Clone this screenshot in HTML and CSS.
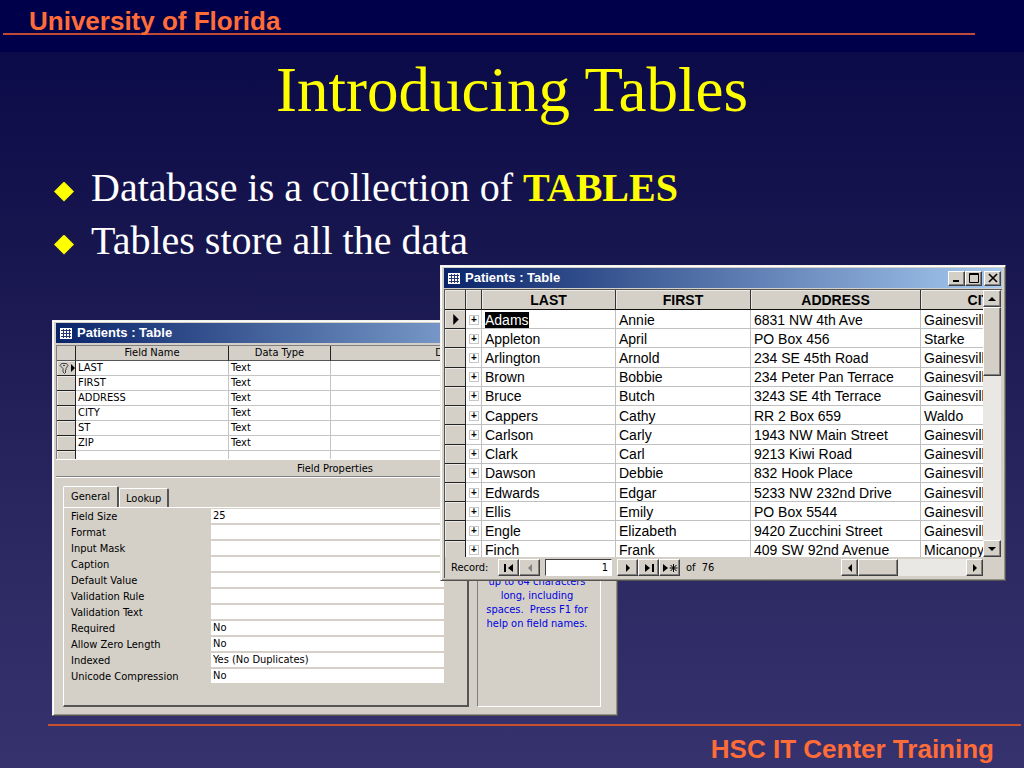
FILE: index.html
```
<!DOCTYPE html>
<html lang="en">
<head>
<meta charset="utf-8">
<title>Introducing Tables</title>
<link rel="stylesheet" href="styles.css">
</head>
<body>
<svg width="0" height="0" class="defs" aria-hidden="true">
  <symbol id="sheet" viewBox="0 0 12 11"><rect width="12" height="11" fill="#fff"/><path d="M1 2.500h10M1 5.500h10M1 8.500h10M3.500 1v9M6.500 1v9M9.500 1v9" stroke="#26386f"/></symbol>
  <symbol id="up" viewBox="0 0 8 8"><path d="M0 6L4 2L8 6Z"/></symbol>
  <symbol id="down" viewBox="0 0 8 8"><path d="M0 2L4 6L8 2Z"/></symbol>
  <symbol id="left" viewBox="0 0 8 8"><path d="M6 0L2 4L6 8Z"/></symbol>
  <symbol id="right" viewBox="0 0 8 8"><path d="M2 0L6 4L2 8Z"/></symbol>
  <symbol id="first" viewBox="0 0 12 8"><path d="M1 0h2v8h-2zM10 0L5 4L10 8Z"/></symbol>
  <symbol id="last" viewBox="0 0 12 8"><path d="M9 0h2v8h-2zM2 0L7 4L2 8Z"/></symbol>
  <symbol id="new" viewBox="0 0 16 10"><path d="M1 1L6 5L1 9Z"/><path d="M11.500 1v8M7.500 5h8M8.500 2l6 6M14.500 2l-6 6" stroke="#000" fill="none"/></symbol>
</svg>
<div class="slide">
  <header class="top"><p class="brand">University of Florida</p></header>
  <main class="content">
    <h1 class="title">Introducing Tables</h1>
    <ul class="points">
      <li>Database is a collection of <strong>TABLES</strong></li>
      <li>Tables store all the data</li>
    </ul>
    <div class="desktop">
      <section class="window design" aria-label="Patients table design">
        <div class="titlebar"><svg class="app"><use href="#sheet"/></svg><span>Patients : Table</span></div>
        <div class="fields-wrap">
          <table class="fields">
            <colgroup><col class="c-mark"><col class="c-name"><col class="c-type"><col></colgroup>
            <thead><tr><th></th><th>Field Name</th><th>Data Type</th><th class="desc">Description</th></tr></thead>
            <tbody>
              <tr><td class="sel"><svg class="key" viewBox="0 0 16 12"><path d="M2.500 1.500h5l1.500 2-2 3v1.500l-1 1 1 1-1.500 1.500-1.500-1.500v-3.500l-3-3z" fill="#d4d0c8" stroke="#444"/><path d="M4 3.500h2" stroke="#444"/><path d="M12 2L16 6L12 10Z"/></svg></td><td>LAST</td><td>Text</td><td></td></tr>
              <tr><td class="sel"></td><td>FIRST</td><td>Text</td><td></td></tr>
              <tr><td class="sel"></td><td>ADDRESS</td><td>Text</td><td></td></tr>
              <tr><td class="sel"></td><td>CITY</td><td>Text</td><td></td></tr>
              <tr><td class="sel"></td><td>ST</td><td>Text</td><td></td></tr>
              <tr><td class="sel"></td><td>ZIP</td><td>Text</td><td></td></tr>
              <tr><td class="sel"></td><td></td><td></td><td></td></tr>
            </tbody>
          </table>
        </div>
        <div class="caption">Field Properties</div>
        <div class="props">
          <div class="sheet">
            <div class="tabs"><button class="tab active">General</button><button class="tab">Lookup</button></div>
            <form class="panel">
              <label><span>Field Size</span><input value="25"></label>
              <label><span>Format</span><input></label>
              <label><span>Input Mask</span><input></label>
              <label><span>Caption</span><input></label>
              <label><span>Default Value</span><input></label>
              <label><span>Validation Rule</span><input></label>
              <label><span>Validation Text</span><input></label>
              <label><span>Required</span><input value="No"></label>
              <label><span>Allow Zero Length</span><input value="No"></label>
              <label><span>Indexed</span><input value="Yes (No Duplicates)"></label>
              <label><span>Unicode Compression</span><input value="No"></label>
            </form>
          </div>
          <aside class="hint">A field name can be<br>up to 64 characters<br>long, including<br>spaces.&nbsp; Press F1 for<br>help on field names.</aside>
        </div>
      </section>

      <section class="window data" aria-label="Patients table data">
        <div class="titlebar"><svg class="app"><use href="#sheet"/></svg><span>Patients : Table</span>
          <div class="controls">
            <button aria-label="Minimize"><svg viewBox="0 0 12 10"><path d="M2 7h6v2h-6z"/></svg></button>
            <button aria-label="Maximize"><svg viewBox="0 0 12 10"><path d="M1.500 .5h9v9h-9zM1 1.500h10" fill="none" stroke="#000"/></svg></button>
            <button class="close" aria-label="Close"><svg viewBox="0 0 12 10"><path d="M2 1L10 9M10 1L2 9" stroke="#000" stroke-width="1.600"/></svg></button>
          </div>
        </div>
        <div class="view">
          <div class="records-wrap">
            <table class="records">
              <colgroup><col class="d-sel"><col class="d-plus"><col class="d-last"><col class="d-first"><col class="d-addr"><col class="d-city"></colgroup>
              <thead><tr><th></th><th></th><th>LAST</th><th>FIRST</th><th>ADDRESS</th><th>CITY</th></tr></thead>
              <tbody>
                <tr><td class="sel"><svg class="arrow"><use href="#right"/></svg></td><td><button class="plus">+</button></td><td><mark>Adams</mark></td><td>Annie</td><td>6831 NW 4th Ave</td><td>Gainesville</td></tr>
                <tr><td class="sel"></td><td><button class="plus">+</button></td><td>Appleton</td><td>April</td><td>PO Box 456</td><td>Starke</td></tr>
                <tr><td class="sel"></td><td><button class="plus">+</button></td><td>Arlington</td><td>Arnold</td><td>234 SE 45th Road</td><td>Gainesville</td></tr>
                <tr><td class="sel"></td><td><button class="plus">+</button></td><td>Brown</td><td>Bobbie</td><td>234 Peter Pan Terrace</td><td>Gainesville</td></tr>
                <tr><td class="sel"></td><td><button class="plus">+</button></td><td>Bruce</td><td>Butch</td><td>3243 SE 4th Terrace</td><td>Gainesville</td></tr>
                <tr><td class="sel"></td><td><button class="plus">+</button></td><td>Cappers</td><td>Cathy</td><td>RR 2 Box 659</td><td>Waldo</td></tr>
                <tr><td class="sel"></td><td><button class="plus">+</button></td><td>Carlson</td><td>Carly</td><td>1943 NW Main Street</td><td>Gainesville</td></tr>
                <tr><td class="sel"></td><td><button class="plus">+</button></td><td>Clark</td><td>Carl</td><td>9213 Kiwi Road</td><td>Gainesville</td></tr>
                <tr><td class="sel"></td><td><button class="plus">+</button></td><td>Dawson</td><td>Debbie</td><td>832 Hook Place</td><td>Gainesville</td></tr>
                <tr><td class="sel"></td><td><button class="plus">+</button></td><td>Edwards</td><td>Edgar</td><td>5233 NW 232nd Drive</td><td>Gainesville</td></tr>
                <tr><td class="sel"></td><td><button class="plus">+</button></td><td>Ellis</td><td>Emily</td><td>PO Box 5544</td><td>Gainesville</td></tr>
                <tr><td class="sel"></td><td><button class="plus">+</button></td><td>Engle</td><td>Elizabeth</td><td>9420 Zucchini Street</td><td>Gainesville</td></tr>
                <tr><td class="sel"></td><td><button class="plus">+</button></td><td>Finch</td><td>Frank</td><td>409 SW 92nd Avenue</td><td>Micanopy</td></tr>
              </tbody>
            </table>
          </div>
          <div class="vscroll">
            <button aria-label="Scroll up"><svg><use href="#up"/></svg></button>
            <div class="thumb"></div>
            <button class="end" aria-label="Scroll down"><svg><use href="#down"/></svg></button>
          </div>
        </div>
        <div class="navigator">
          <label for="record">Record:</label>
          <button aria-label="First record"><svg class="wide"><use href="#first"/></svg></button>
          <button class="dim" aria-label="Previous record"><svg><use href="#left"/></svg></button>
          <input id="record" value="1">
          <button aria-label="Next record"><svg><use href="#right"/></svg></button>
          <button aria-label="Last record"><svg class="wide"><use href="#last"/></svg></button>
          <button aria-label="New record"><svg class="wider"><use href="#new"/></svg></button>
          <span class="total">of&nbsp; 76</span>
          <div class="hscroll">
            <button aria-label="Scroll left"><svg><use href="#left"/></svg></button>
            <div class="thumb"></div>
            <button class="end" aria-label="Scroll right"><svg><use href="#right"/></svg></button>
          </div>
        </div>
      </section>
    </div>
  </main>
  <footer class="bottom"><p>HSC IT Center Training</p></footer>
</div>
</body>
</html>
```
FILE: styles.css
```
* { box-sizing: border-box; }
body { margin: 0; }
p, h1, ul { margin: 0; padding: 0; }
.defs { position: absolute; }
button, input { font: inherit; color: inherit; margin: 0; padding: 0; border: 0; border-radius: 0; }

.slide {
  display: flex;
  flex-direction: column;
  min-height: 100vh;
  background: linear-gradient(#080848, #19174f 35%, #29265f 65%, #35326e);
  overflow: hidden;
}
.top { height: 52px; padding-left: 3px; padding-right: 49px; background: #00004a; }
.brand {
  padding: 9px 0 0 26px;
  border-bottom: 2px solid #c04a38;
  color: #ff6c38;
  font: bold 26px/24px "Liberation Sans", Arial, sans-serif;
}
.content { flex: 1; display: flex; flex-direction: column; }
.title {
  padding-top: 2px;
  color: #ffff00;
  font: 63px/73px "Liberation Serif", "Times New Roman", serif;
  text-align: center;
}
.points {
  padding: 34px 0 0 54px;
  list-style: none;
  color: #fff;
  font: 40px/53px "Liberation Serif", "Times New Roman", serif;
}
.points li { display: flex; align-items: center; white-space: pre; }
.points li::before {
  content: "";
  width: 20px;
  height: 20px;
  margin: 8px 17px 0 0;
  background: #ffff00;
  clip-path: polygon(50% 0, 100% 50%, 50% 100%, 0 50%);
}
.points strong { color: #ffff00; }
.bottom { padding-left: 48px; padding-right: 3px; }
.bottom p {
  padding: 4px 27px 0 0;
  border-top: 2px solid #c8502f;
  color: #ff6c38;
  font: bold 26px/38px "Liberation Sans", Arial, sans-serif;
  text-align: right;
}

/* Overlapping windows */
.desktop { position: relative; flex: 1; min-height: 456px; }
.window {
  position: absolute;
  padding: 2px 3px;
  background: #d4d0c8;
  border: 1px solid;
  border-color: #f4f2ee #55534f #55534f #f4f2ee;
  box-shadow: inset 1px 1px #fff, inset -1px -1px #96938d;
  color: #000;
  font: 11px/15px "DejaVu Sans Condensed", Tahoma, sans-serif;
}
.design { left: 52px; right: 406px; top: 53px; }
.data { left: 440px; right: 18px; top: -2px; }
.titlebar {
  display: flex;
  align-items: center;
  height: 20px;
  padding: 0 1px 0 4px;
  background: linear-gradient(90deg, #0a246a, #a6caf0);
  color: #fff;
  font: bold 13px/20px "Liberation Sans", Arial, sans-serif;
}
.app { width: 12px; height: 11px; margin-right: 5px; }
.controls { display: flex; margin-left: auto; }
.controls button { width: 17px; height: 15px; }
.controls .close { margin-left: 2px; }

.window button:not(.tab, .plus), .thumb {
  display: flex;
  align-items: center;
  justify-content: center;
  background: #d4d0c8;
  border: 1px solid;
  border-color: #fff #404040 #404040 #fff;
  box-shadow: inset -1px -1px #808080;
}
.window button svg { width: 8px; height: 8px; }
.window .controls svg { flex: none; width: 12px; height: 10px; }
.window button .wide { width: 12px; }
.window button .wider { width: 16px; height: 10px; }

table { border-collapse: separate; border-spacing: 0; table-layout: fixed; }
th, td { padding: 0; overflow: hidden; white-space: nowrap; text-align: left; }
.sel { background: #d4d0c8; }

.fields-wrap { height: 114px; margin-top: 2px; border: 1px solid #808080; border-bottom: 0; overflow: hidden; background: #fff; }
.fields { width: 100%; }
.c-mark { width: 19px; }
.c-name { width: 153px; }
.c-type { width: 102px; }
.fields th {
  height: 15px;
  background: #d4d0c8;
  border-right: 1px solid #222;
  border-bottom: 1px solid #555;
  font-weight: normal;
  line-height: 14px;
  text-align: center;
}
.fields .desc { padding-right: 16px; }
.fields td { height: 15px; padding-left: 2px; border-right: 1px solid #c4c4c4; border-bottom: 1px solid #c4c4c4; line-height: 14px; }
.fields .sel { padding: 0; border-color: #222; box-shadow: inset 1px 1px #eceae6; }
.key { display: block; width: 16px; height: 12px; margin-left: 2px; }
.caption { height: 18px; border-top: 1px solid #fff; border-bottom: 1px solid #808080; line-height: 17px; text-align: center; }
.props { display: flex; gap: 8px; padding: 8px 13px 6px 7px; border-top: 1px solid #fff; }
.sheet { flex: 1; }
.tabs { display: flex; align-items: flex-end; height: 21px; }
.tab {
  height: 19px;
  padding: 0 6px;
  background: #d4d0c8;
  border: solid;
  border-width: 1px 2px 0 1px;
  border-color: #fff #555 #fff #fff;
  border-radius: 2px 2px 0 0;
}
.tab.active { height: 21px; padding: 0 7px 2px; }
.panel { padding: 1px 23px 20px 7px; border: solid; border-width: 1px 2px 2px 1px; border-color: #fff #555 #555 #fff; }
.panel label { display: flex; height: 16px; }
.panel span { width: 140px; line-height: 15px; }
.panel input { flex: 1; min-width: 0; height: 14px; padding-left: 2px; background: #fff; line-height: 14px; }
.hint {
  width: 124px;
  padding: 74px 4px 0 0;
  border: 1px solid;
  border-color: #808080 #fff #fff #808080;
  color: #0000e0;
  line-height: 14px;
  text-align: center;
}

.view { display: flex; height: 268px; margin-top: 1px; padding-right: 1px; border-top: 1px solid #555; border-left: 1px solid #555; }
.records-wrap { flex: 1; min-width: 0; overflow: hidden; background: #fff; }
.records { width: 602px; height: 270px; font: 14px/16px "Liberation Sans", Arial, sans-serif; }
.d-sel { width: 21px; }
.d-plus { width: 16px; }
.d-last { width: 134px; }
.d-first { width: 135px; }
.d-addr { width: 170px; }
.d-city { width: 126px; }
.records th { height: 20px; background: #d4d0c8; border-right: 1px solid #333; border-bottom: 1px solid #111; box-shadow: inset 1px 1px #eceae6; text-align: center; }
.records td { padding: 1px 0 0 3px; border-right: 1px solid #c0c0c0; border-bottom: 1px solid #c0c0c0; }
.records .sel { padding-left: 5px; border-color: #222; box-shadow: inset 1px 1px #eceae6; }
.arrow { display: block; width: 12px; height: 11px; }
.records mark { background: #000; color: #fff; }
.plus { display: block; width: 10px; height: 10px; background: #fff; border: 1px solid #c8c8c8; font: bold 10px/8px "Liberation Sans", Arial, sans-serif; }
.vscroll, .hscroll { display: flex; background: #eae8e4; }
.vscroll { flex-direction: column; width: 18px; }
.vscroll button { height: 17px; }
.vscroll .thumb { height: 69px; }
.vscroll .end { margin-top: auto; }
.navigator { display: flex; align-items: center; height: 21px; padding: 1px 19px 1px 6px; border-left: 1px solid #555; }
.navigator label { width: 47px; }
.navigator button { width: 21px; height: 17px; }
.navigator .dim { fill: #808080; }
.navigator input { width: 67px; height: 17px; margin: 0 5px; padding-right: 3px; background: #fff; border: 1px solid; border-color: #404040 #fff #fff #404040; text-align: right; }
.total { margin-left: 6px; }
.hscroll { width: 142px; margin-left: auto; }
.navigator .hscroll button { width: 17px; }
.hscroll .thumb { width: 40px; }
.hscroll .end { margin-left: auto; }
```
